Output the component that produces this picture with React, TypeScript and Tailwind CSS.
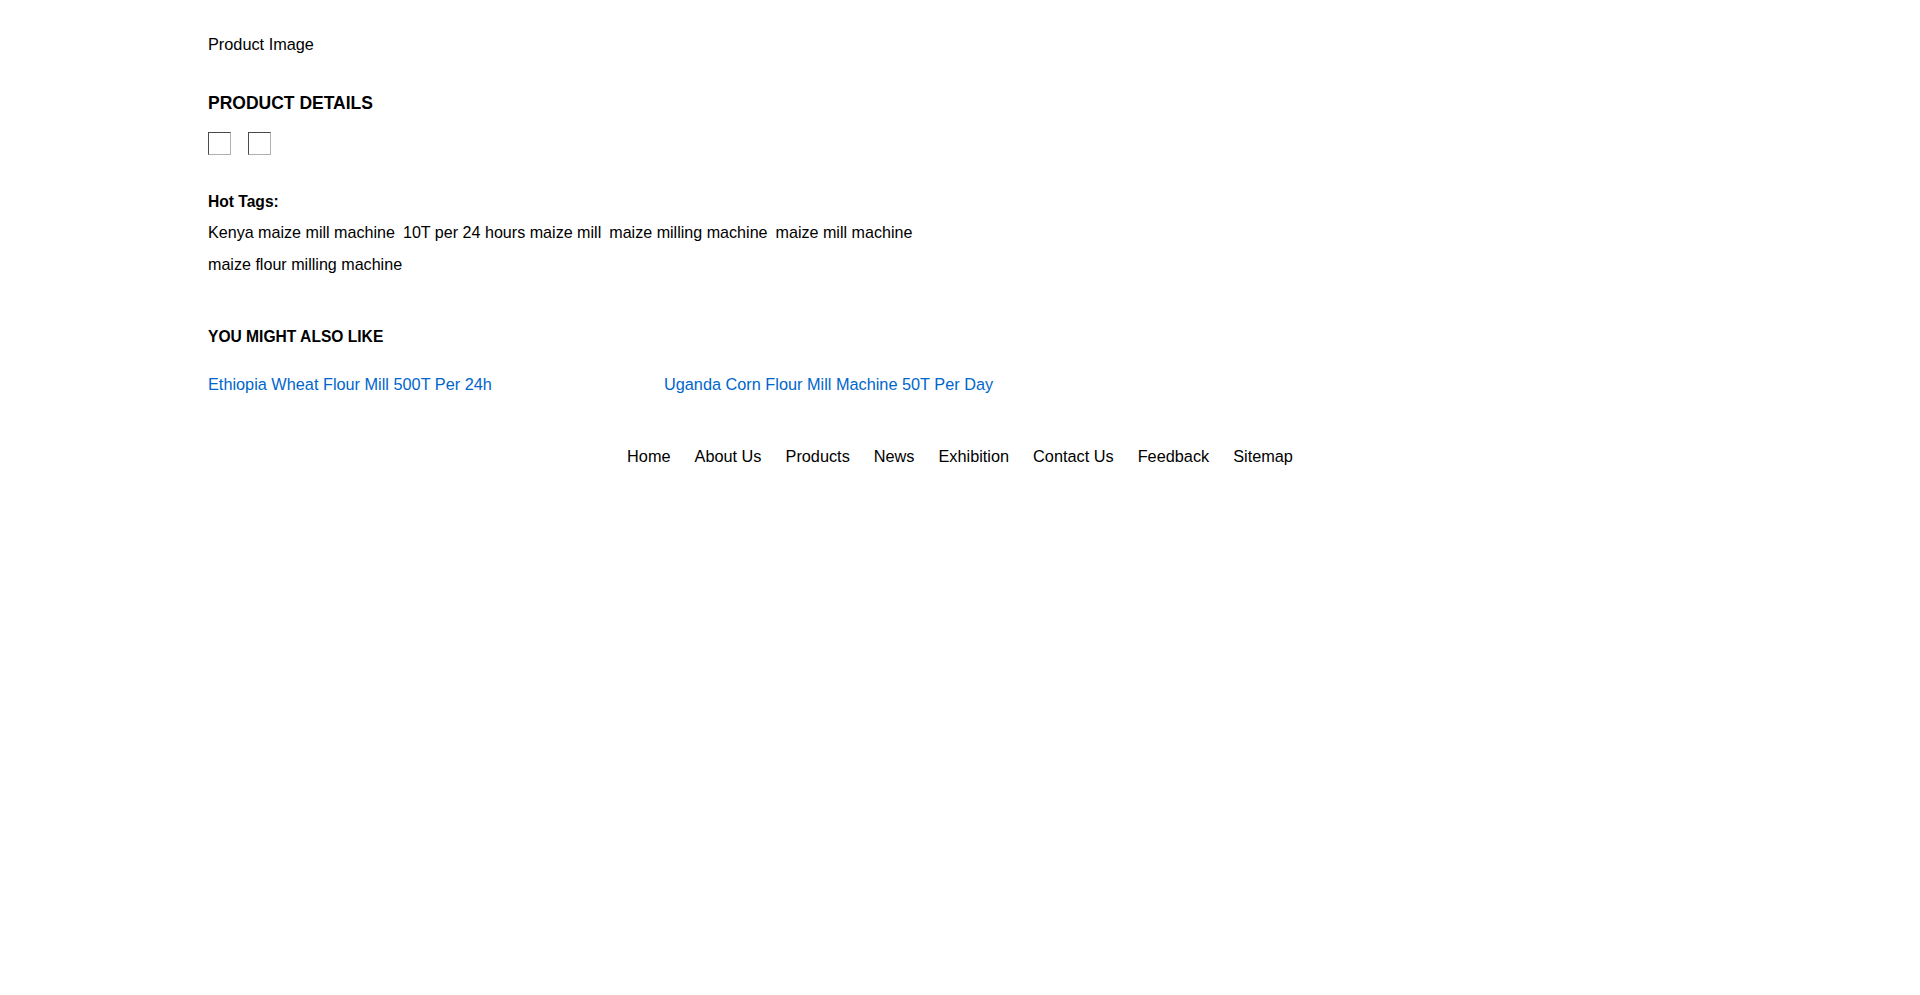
import React from "react";

const tags = [
  "Kenya maize mill machine",
  "10T per 24 hours maize mill",
  "maize milling machine",
  "maize mill machine",
  "maize flour milling machine",
];

const nav = ["Home", "About Us", "Products", "News", "Exhibition", "Contact Us", "Feedback", "Sitemap"];

export default function App() {
  return (
    <div
      className="min-h-[995px] w-full bg-white text-black"
      style={{ fontFamily: '"Liberation Sans", Arial, Helvetica, sans-serif' }}
    >
      <div className="pl-[208px] pt-[31.5px]">
        <div className="text-[16.3px] leading-[24px]">Product Image</div>

        <h2 className="mt-[35.5px] text-[17.5px] font-bold leading-[24px]">PRODUCT DETAILS</h2>

        <div className="mt-[17px] flex gap-[17px]">
          <div className="h-[23px] w-[23px] border border-t-[#4a4a4a] border-l-[#4a4a4a] border-b-[#b0b0b0] border-r-[#b0b0b0]" />
          <div className="h-[23px] w-[23px] border border-t-[#4a4a4a] border-l-[#4a4a4a] border-b-[#b0b0b0] border-r-[#b0b0b0]" />
        </div>

        <div className="mt-[34.5px] text-[15.6px] font-bold leading-[24px]">Hot Tags:</div>

        <div className="mt-[2.5px] flex w-[760px] flex-wrap gap-x-[8px] text-[16.1px] leading-[32px]">
          {tags.map((t) => (
            <a key={t} className="cursor-pointer text-black">
              {t}
            </a>
          ))}
        </div>

        <h3 className="mt-[45px] text-[15.6px] font-bold leading-[24px]">YOU MIGHT ALSO LIKE</h3>

        <div className="mt-[22.5px] flex text-[16.3px] leading-[24px] text-[#0066cc]">
          <a className="w-[456px] cursor-pointer">Ethiopia Wheat Flour Mill 500T Per 24h</a>
          <a className="cursor-pointer">Uganda Corn Flour Mill Machine 50T Per Day</a>
        </div>
      </div>

      <nav className="mt-[48.5px] flex justify-center gap-[24px] text-[16.3px] leading-[24px]">
        {nav.map((n) => (
          <a key={n} className="cursor-pointer text-black">
            {n}
          </a>
        ))}
      </nav>
    </div>
  );
}
